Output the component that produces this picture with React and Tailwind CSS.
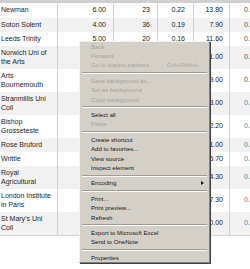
import React from 'react';

// Données du tableau (classement des établissements)
const rows = [
  { name: 'Newman', a: '6.00', b: '23', c: '0.22', d: '13.80', e: '0.61', tone: 'text-[#555]' },
  { name: 'Soton Solent', a: '4.00', b: '36', c: '0.19', d: '7.90', e: '0.58', tone: 'text-[#555]' },
  { name: 'Leeds Trinity', a: '5.00', b: '20', c: '0.16', d: '11.60', e: '0.55', tone: 'text-[#555]' },
  { name: 'Norwich Uni of the Arts', a: '3.00', b: '14', c: '0.12', d: '11.00', e: '0.52', tall: true, tone: 'text-[#555]' },
  { name: 'Arts Bournemouth', a: '5.00', b: '18', c: '0.11', d: '9.00', e: '0.50', tall: true, tone: 'text-[#555]' },
  { name: 'Stranmillis Uni Coll', a: '2.00', b: '11', c: '0.10', d: '3.00', e: '0.47', tall: true, tone: 'text-[#3b8ea5]' },
  { name: 'Bishop Grosseteste', a: '4.00', b: '12', c: '0.09', d: '2.20', e: '0.45', tall: true, tone: 'text-[#3b8ea5]' },
  { name: 'Rose Bruford', a: '1.00', b: '9', c: '0.08', d: '1.00', e: '0.42', tone: 'text-[#3b8ea5]' },
  { name: 'Writtle', a: '2.00', b: '10', c: '0.07', d: '5.70', e: '0.40', tone: 'text-[#3b8ea5]' },
  { name: 'Royal Agricultural', a: '3.00', b: '8', c: '0.06', d: '4.30', e: '0.38', tall: true, tone: 'text-[#3b8ea5]' },
  { name: 'London Institute in Paris', a: '1.00', b: '5', c: '0.05', d: '7.30', e: '0.35', tall: true, tone: 'text-[#d0603a]' },
  { name: "St Mary's Uni Coll", a: '2.00', b: '7', c: '0.04', d: '10.00', e: '0.33', tall: true, tone: 'text-[#3b8ea5]' },
];

// Menu contextuel (style Windows classique)
const menu = [
  { label: 'Back', disabled: true },
  { label: 'Forward', disabled: true },
  { label: 'Go to copied address', disabled: true, shortcut: 'Ctrl+Shift+L' },
  { sep: true },
  { label: 'Save background as...', disabled: true },
  { label: 'Set as background', disabled: true },
  { label: 'Copy background', disabled: true },
  { sep: true },
  { label: 'Select all' },
  { label: 'Paste', disabled: true },
  { sep: true },
  { label: 'Create shortcut' },
  { label: 'Add to favorites...' },
  { label: 'View source' },
  { label: 'Inspect element' },
  { sep: true },
  { label: 'Encoding', submenu: true },
  { sep: true },
  { label: 'Print...' },
  { label: 'Print preview...' },
  { label: 'Refresh' },
  { sep: true },
  { label: 'Export to Microsoft Excel' },
  { label: 'Send to OneNote' },
  { sep: true },
  { label: 'Properties' },
];

function ContextMenu() {
  return (
    <div className="absolute left-[79px] top-[41px] w-[131px] bg-[#d4d0c8] border border-t-[#f4f3ef] border-l-[#f4f3ef] border-r-[#808080] border-b-[#808080] shadow-[1px_1px_0_#404040] text-[6.1px] font-['Liberation_Sans',Arial,sans-serif]">
      {menu.map((item, i) =>
        item.sep ? (
          <div key={i} className="h-[6px] flex flex-col justify-center px-[2px]">
            <div className="h-px bg-[#a09c94]" />
            <div className="h-px bg-[#fbfaf8]" />
          </div>
        ) : (
          <div
            key={i}
            className={`h-[9.4px] flex items-center justify-between pl-[11px] pr-[10px] leading-none ${
              item.disabled ? 'text-[#a7a39b]' : 'text-[#161616]'
            }`}
          >
            <span>{item.label}</span>
            {item.shortcut && <span>{item.shortcut}</span>}
            {item.submenu && (
              <span className="w-0 h-0 border-y-[2.5px] border-y-transparent border-l-[3px] border-l-[#161616] -mr-[5px]" />
            )}
          </div>
        )
      )}
    </div>
  );
}

export default function App() {
  return (
    <div className="relative w-[250px] h-[269px] overflow-hidden bg-white font-['Liberation_Sans',Arial,sans-serif] text-[7px] text-[#262626]">
      <div className="h-[3px] bg-[#cfcfcf]" />
      <div className="w-[300px] border-b border-[#d6d6d6]">
        {rows.map((r, i) => (
          <div
            key={r.name}
            className={`flex ${i === 0 ? 'h-[15px]' : r.tall ? 'h-[23px]' : 'h-[14px]'} ${
              i % 2 === 1 ? 'bg-[#f1f1f1]' : 'bg-white'
            }`}
          >
            <div className="w-[58px] shrink-0 border-r border-[#d0d0d0] flex items-center pl-[1px] pr-[4px] leading-[8.5px]">
              {r.name}
            </div>
            <div className="w-[56px] shrink-0 border-r border-[#d0d0d0] flex items-center justify-end pr-[7px]">
              {r.a}
            </div>
            <div className="w-[44px] shrink-0 border-r border-[#d0d0d0] flex items-center justify-end pr-[7px]">
              {r.b}
            </div>
            <div className="w-[36px] shrink-0 border-r border-[#d0d0d0] flex items-center justify-end pr-[8px]">
              {r.c}
            </div>
            <div className="w-[36px] shrink-0 border-r border-[#d0d0d0] flex items-center justify-end pr-[6px]">
              {r.d}
            </div>
            <div className={`flex-1 flex items-center pl-[14px] ${r.tone}`}>{r.e}</div>
          </div>
        ))}
      </div>
      <ContextMenu />
    </div>
  );
}
